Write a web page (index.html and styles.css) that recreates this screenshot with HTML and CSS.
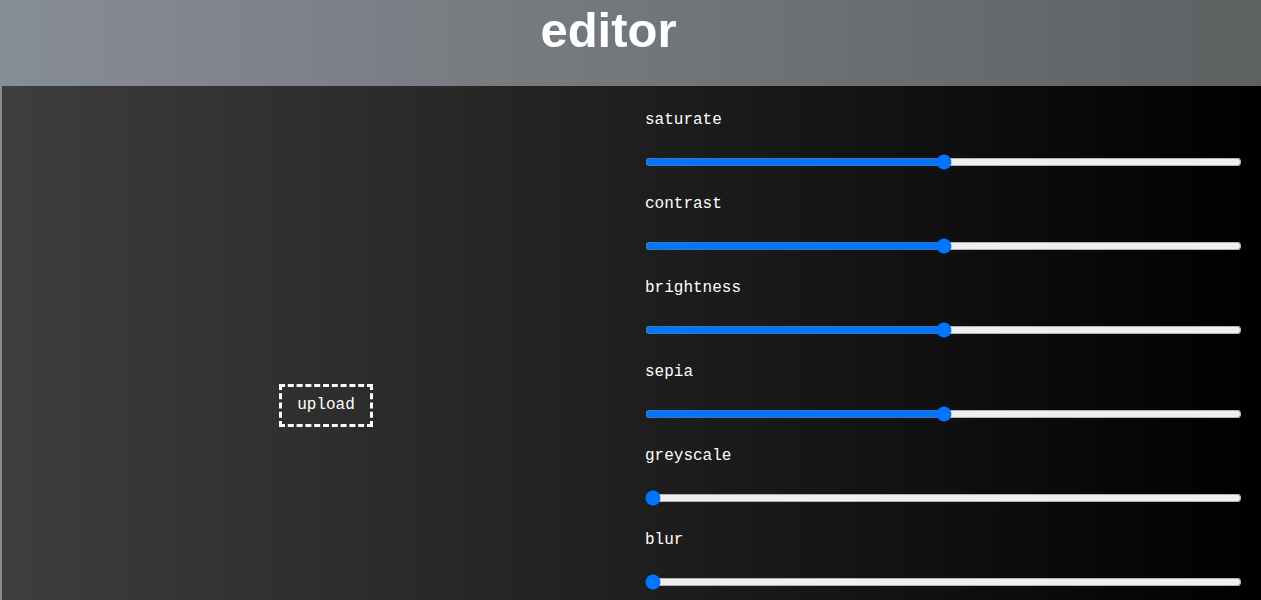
FILE: index.html
```html
<!DOCTYPE html>
<html lang="en">
<head>
<meta charset="utf-8">
<title>editor</title>
<link rel="stylesheet" href="styles.css">
</head>
<body>
<header class="top">
  <h1 class="title">editor</h1>
</header>
<main class="editor">
  <section class="preview">
    <label class="upload">upload<input class="file" type="file" accept="image/*"></label>
  </section>
  <section class="controls">
    <div class="control">
      <label class="name" for="saturate">saturate</label>
      <input class="range" id="saturate" type="range" min="0" max="200" value="100">
    </div>
    <div class="control">
      <label class="name" for="contrast">contrast</label>
      <input class="range" id="contrast" type="range" min="0" max="200" value="100">
    </div>
    <div class="control">
      <label class="name" for="brightness">brightness</label>
      <input class="range" id="brightness" type="range" min="0" max="200" value="100">
    </div>
    <div class="control">
      <label class="name" for="sepia">sepia</label>
      <input class="range" id="sepia" type="range" min="0" max="200" value="100">
    </div>
    <div class="control">
      <label class="name" for="greyscale">greyscale</label>
      <input class="range" id="greyscale" type="range" min="0" max="100" value="0">
    </div>
    <div class="control">
      <label class="name" for="blur">blur</label>
      <input class="range" id="blur" type="range" min="0" max="10" value="0">
    </div>
  </section>
</main>
</body>
</html>
```

FILE: styles.css
```css
html, body {
  margin: 0;
  padding: 0;
}
body {
  background: linear-gradient(to right, #878d94 0%, #5c6162 100%);
  font-family: "Courier New", Courier, "Nimbus Mono PS", "Nimbus Mono L", FreeMono, "Liberation Mono", monospace;
  color: #fff;
}
.top {
  height: 86px;
  box-sizing: border-box;
  padding-top: 2px;
  padding-right: 44px;
  text-align: center;
}
.title {
  margin: 0;
  font-family: "Liberation Sans", Arial, sans-serif;
  font-weight: bold;
  font-size: 49px;
  line-height: 56px;
  color: #fff;
}
.editor {
  margin-left: 2px;
  min-height: 638px;
  display: grid;
  grid-template-columns: 643px 1fr;
  background: linear-gradient(to right, #3e3e3e 0%, #000 100%);
}
.preview {
  display: flex;
  align-items: center;
  justify-content: center;
  padding-left: 5px;
  box-sizing: border-box;
}
.upload {
  display: block;
  border: 3px dashed #fff;
  padding: 9px 15px 10px;
  font-size: 16px;
  line-height: 18px;
  color: #fff;
  cursor: pointer;
}
.file {
  display: none;
}
.controls {
  padding: 25px 19px 24px 0;
  display: flex;
  flex-direction: column;
  gap: 25px;
}
.control {
  display: flex;
  flex-direction: column;
  gap: 25px;
}
.name {
  display: block;
  font-size: 16px;
  line-height: 18px;
  color: #fff;
}
.range {
  display: block;
  width: 100%;
  height: 16px;
  margin: 0;
}
```
